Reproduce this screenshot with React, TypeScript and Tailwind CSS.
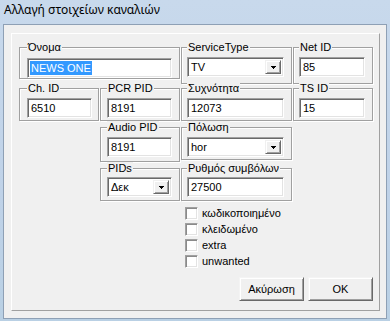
const font = { fontFamily: '"Liberation Sans", Arial, sans-serif' };

function Arrow() {
  return (
    <svg width="5" height="3" viewBox="0 0 5 3" className="block">
      <rect x="0" y="0" width="5" height="1" fill="#000" />
      <rect x="1" y="1" width="3" height="1" fill="#000" />
      <rect x="2" y="2" width="1" height="1" fill="#000" />
    </svg>
  );
}

function Edit({ value, selected }: { value: string; selected?: boolean }) {
  return (
    <div className="h-[20px] bg-white border border-t-[#a0a0a0] border-l-[#a0a0a0] border-b-white border-r-white shadow-[inset_1px_1px_0_#696969,inset_-1px_-1px_0_#e3e3e3] flex items-center pl-[2px] text-[11px] text-black">
      {selected ? (
        <span className="bg-[#3399ff] text-white px-[1px] leading-[14px]">{value}</span>
      ) : (
        <span className="pl-[1px]">{value}</span>
      )}
    </div>
  );
}

function Combo({ value }: { value: string }) {
  return (
    <div className="h-[20px] bg-white border border-t-[#a0a0a0] border-l-[#a0a0a0] border-b-white border-r-white shadow-[inset_1px_1px_0_#696969,inset_-1px_-1px_0_#e3e3e3] flex items-center pl-[3px] text-[11px] text-black">
      <span className="flex-1">{value}</span>
      <div className="w-[16px] h-[14px] mr-[2px] bg-[#f0f0f0] border border-t-[#f0f0f0] border-l-[#f0f0f0] border-b-[#696969] border-r-[#696969] shadow-[inset_1px_1px_0_#fff,inset_-1px_-1px_0_#a0a0a0] flex items-center justify-center">
        <Arrow />
      </div>
    </div>
  );
}

function Group({
  label,
  className,
  children,
}: {
  label: string;
  className: string;
  children: React.ReactNode;
}) {
  return (
    <div
      className={`border border-[#a0a0a0] shadow-[inset_1px_1px_0_#fff,1px_1px_0_#fff] ${className}`}
    >
      <span className="block w-fit -mt-[7px] px-[1px] bg-[#f0f0f0] leading-[13px] text-[11px] text-black">
        {label}
      </span>
      {children}
    </div>
  );
}

function Check({ label }: { label: string }) {
  return (
    <div className="h-[16px] flex items-start">
      <div className="w-[13px] h-[13px] bg-white border border-t-[#a0a0a0] border-l-[#a0a0a0] border-b-white border-r-white shadow-[inset_1px_1px_0_#8a8a8a,inset_-1px_-1px_0_#e3e3e3]" />
      <span className="ml-[4px] text-[11px] leading-[13px] text-black">{label}</span>
    </div>
  );
}

function Button({ label }: { label: string }) {
  return (
    <button className="w-[65px] h-[24px] bg-[#f0f0f0] border border-t-[#f4f4f4] border-l-[#f4f4f4] border-b-[#696969] border-r-[#696969] shadow-[inset_1px_1px_0_#fff,inset_-1px_-1px_0_#a0a0a0] text-[11px] text-black">
      {label}
    </button>
  );
}

export default function App() {
  return (
    <div
      className="w-[390px] h-[321px] overflow-hidden bg-[linear-gradient(180deg,#c8d9ec_0%,#bfd2e8_60%,#b9d0e4_100%)]"
      style={font}
    >
      <div
        className="h-[24px] pl-[4px] pt-[2px] text-[12px] leading-[16px] text-black"
        style={{ fontFamily: '"Noto Sans", "Open Sans", sans-serif' }}
      >
        Αλλαγή στοιχείων καναλιών
      </div>

      <div className="ml-[3px] w-[384px] h-[295px] border border-[#8ea0b5] bg-[#f0f0f0] flex">
        <div className="flex-1 mt-[8px] ml-[7px] mr-[6px] mb-[7px] border border-t-white border-l-white border-b-[#a0a0a0] border-r-[#a0a0a0] flex flex-col">
          <div className="pt-[13px] pl-[7px] grid grid-cols-[80px_80px_111px_80px] grid-rows-[41px_39px_41px_39px_auto] gap-x-[1px] items-start">
            <Group label="Όνομα" className="col-span-2 h-[32px] pl-[7px] pr-[7px]">
              <div className="mt-[4px]">
                <Edit value="NEWS ONE" selected />
              </div>
            </Group>
            <Group label="ServiceType" className="col-start-3 h-[37px] pl-[5px] pr-[7px]">
              <div className="mt-[3px]">
                <Combo value="TV" />
              </div>
            </Group>
            <Group label="Net ID" className="col-start-4 h-[37px] pl-[5px] pr-[7px]">
              <div className="mt-[3px]">
                <Edit value="85" />
              </div>
            </Group>

            <Group label="Ch. ID" className="row-start-2 col-start-1 h-[33px] pl-[7px] pr-[6px]">
              <div className="mt-[3px]">
                <Edit value="6510" />
              </div>
            </Group>
            <Group label="PCR PID" className="row-start-2 col-start-2 h-[33px] pl-[6px] pr-[7px]">
              <div className="mt-[3px]">
                <Edit value="8191" />
              </div>
            </Group>
            <Group label="Συχνότητα" className="row-start-2 col-start-3 h-[33px] pl-[5px] pr-[7px]">
              <div className="mt-[3px]">
                <Edit value="12073" />
              </div>
            </Group>
            <Group label="TS ID" className="row-start-2 col-start-4 h-[33px] pl-[5px] pr-[7px]">
              <div className="mt-[3px]">
                <Edit value="15" />
              </div>
            </Group>

            <Group label="Audio PID" className="row-start-3 col-start-2 h-[35px] pl-[6px] pr-[7px]">
              <div className="mt-[3px]">
                <Edit value="8191" />
              </div>
            </Group>
            <Group label="Πόλωση" className="row-start-3 col-start-3 h-[33px] pl-[5px] pr-[7px]">
              <div className="mt-[3px]">
                <Combo value="hor" />
              </div>
            </Group>

            <Group label="PIDs" className="row-start-4 col-start-2 h-[33px] pl-[6px] pr-[7px]">
              <div className="mt-[2px]">
                <Combo value="Δεκ" />
              </div>
            </Group>
            <Group label="Ρυθμός συμβόλων" className="row-start-4 col-start-3 h-[33px] pl-[5px] pr-[7px]">
              <div className="mt-[2px]">
                <Edit value="27500" />
              </div>
            </Group>

            <div className="row-start-5 col-start-3 col-span-2 pl-[4px] flex flex-col">
              <Check label="κωδικοποιημένο" />
              <Check label="κλειδωμένο" />
              <Check label="extra" />
              <Check label="unwanted" />
            </div>
          </div>

          <div className="mt-[6px] pr-[6px] flex justify-end gap-[4px]">
            <Button label="Ακύρωση" />
            <Button label="OK" />
          </div>
        </div>
      </div>
    </div>
  );
}
